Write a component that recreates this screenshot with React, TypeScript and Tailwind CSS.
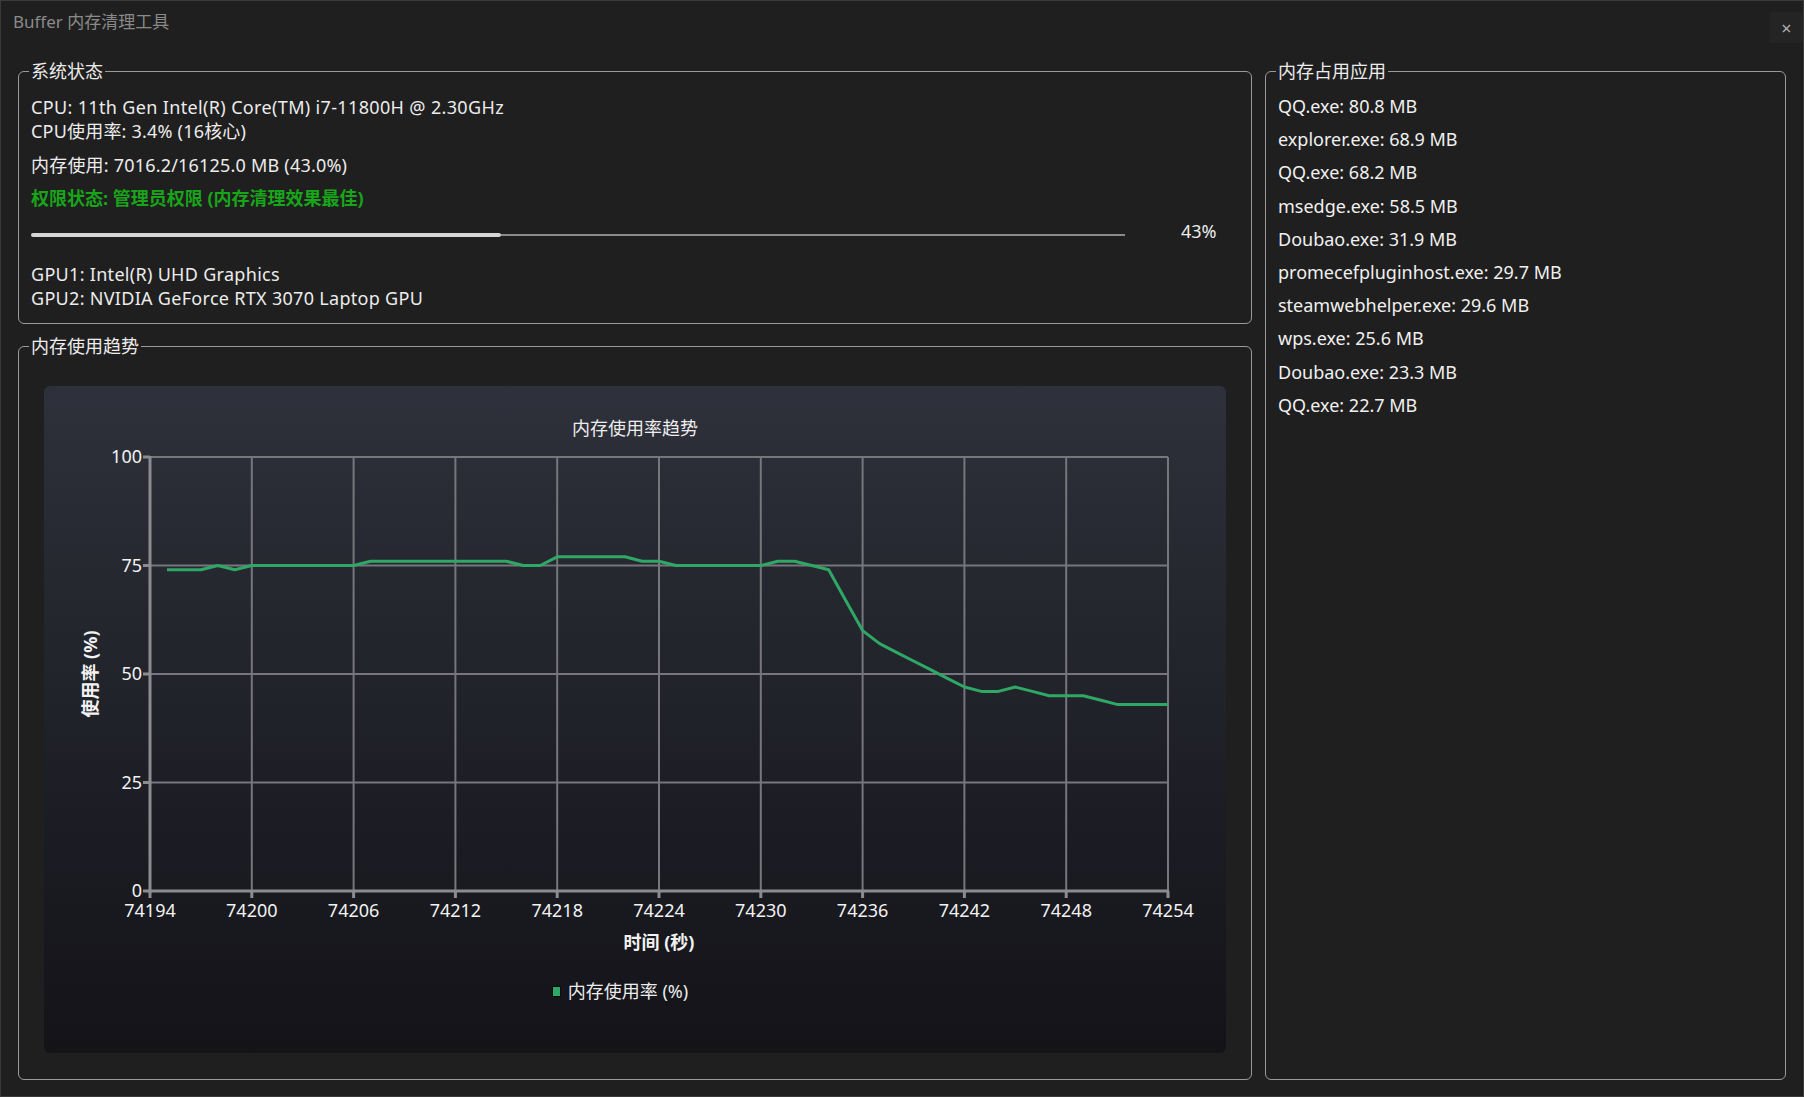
import React from 'react';

const FONT = "font-['Noto_Sans','Noto_Sans_CJK_SC',sans-serif]";

// memory usage samples, one per second starting at 74195
const usage = [
    74, 74, 74, 75, 74, 75, 75, 75, 75, 75, 75, 75, 76, 76, 76, 76, 76, 76, 76, 76, 76, 75, 75, 77, 77, 77, 77,
    77, 76, 76, 75, 75, 75, 75, 75, 75, 76, 76, 75, 74, 67, 60, 57, 55, 53, 51, 49, 47, 46, 46, 47, 46, 45, 45,
    45, 44, 43, 43, 43, 43,
];

const apps = [
    'QQ.exe: 80.8 MB',
    'explorer.exe: 68.9 MB',
    'QQ.exe: 68.2 MB',
    'msedge.exe: 58.5 MB',
    'Doubao.exe: 31.9 MB',
    'promecefpluginhost.exe: 29.7 MB',
    'steamwebhelper.exe: 29.6 MB',
    'wps.exe: 25.6 MB',
    'Doubao.exe: 23.3 MB',
    'QQ.exe: 22.7 MB',
];

// plot geometry inside the svg
const L = 106;
const R = 1124;
const T = 11;
const B = 445;
const T0 = 74194;
const xOf = (t: number) => L + ((t - T0) * (R - L)) / 60;
const yOf = (v: number) => B - (v * (B - T)) / 100;

function GroupBox({ title, className, children }: { title: string; className?: string; children: React.ReactNode }) {
    return (
        <fieldset className={`border border-[#9a9a9a] rounded-[6px] px-[10px] min-w-0 ${className ?? ''}`}>
            <legend className="px-[2px] leading-[24px] text-[18px] text-[#ececec]">{title}</legend>
            {children}
        </fieldset>
    );
}

function TrendChart() {
    const ticksX = Array.from({ length: 11 }, (_, i) => T0 + i * 6);
    const ticksY = [0, 25, 50, 75, 100];
    const points = usage.map((v, i) => `${xOf(T0 + 1 + i).toFixed(1)},${yOf(v).toFixed(1)}`).join(' ');

    return (
        <div className="flex-1 flex flex-col rounded-[6px] bg-linear-to-b from-[#2e313b] to-[#131318]">
            <div className="h-[60px] pt-[30px] text-center leading-[24px] text-[18px] text-[#ececec]">
                内存使用率趋势
            </div>
            <svg width="1182" height="520" className="block overflow-visible text-[18px]">
                {/* grid */}
                {ticksX.slice(1).map((t) => (
                    <line key={t} x1={xOf(t)} y1={T} x2={xOf(t)} y2={B} stroke="#76767c" strokeWidth="2" />
                ))}
                {ticksY.slice(1).map((v) => (
                    <line key={v} x1={L} y1={yOf(v)} x2={R} y2={yOf(v)} stroke="#76767c" strokeWidth="2" />
                ))}

                {/* axes + ticks */}
                <line x1={L} y1={T - 1} x2={L} y2={B + 1.5} stroke="#8c8c90" strokeWidth="3" />
                <line x1={L - 1.5} y1={B} x2={R + 1} y2={B} stroke="#8c8c90" strokeWidth="3" />
                {ticksY.map((v) => (
                    <line key={v} x1={L - 7} y1={yOf(v)} x2={L} y2={yOf(v)} stroke="#8c8c90" strokeWidth="3" />
                ))}
                {ticksX.map((t) => (
                    <line key={t} x1={xOf(t)} y1={B} x2={xOf(t)} y2={B + 7} stroke="#8c8c90" strokeWidth="3" />
                ))}

                {/* labels */}
                {ticksY.map((v) => (
                    <text key={v} x={L - 8} y={yOf(v) - 1} textAnchor="end" dominantBaseline="central" fill="#f2f2f2">
                        {v}
                    </text>
                ))}
                {ticksX.map((t) => (
                    <text key={t} x={xOf(t)} y={B + 19} textAnchor="middle" dominantBaseline="central" fill="#f2f2f2">
                        {t}
                    </text>
                ))}
                <text x={(L + R) / 2} y={B + 51} textAnchor="middle" dominantBaseline="central" fill="#f2f2f2" fontWeight="700">
                    时间 (秒)
                </text>
                <text
                    x={46}
                    y={(T + B) / 2}
                    textAnchor="middle"
                    dominantBaseline="central"
                    fill="#f2f2f2"
                    fontWeight="700"
                    transform={`rotate(-90 46 ${(T + B) / 2})`}
                >
                    使用率 (%)
                </text>

                <polyline points={points} fill="none" stroke="#2fa865" strokeWidth="3" strokeLinejoin="round" />
            </svg>
            <div className="h-[50px] flex items-center justify-center gap-[7px] text-[18px] text-[#ececec] pr-[30px]">
                <span className="w-[9px] h-[11px] bg-[#2fa865] border border-[#0c0c0c]"></span>
                <span>内存使用率 (%)</span>
            </div>
        </div>
    );
}

export default function App() {
    return (
        <div className={`w-[1804px] h-[1097px] flex flex-col bg-[#1f1f1f] border border-[#3a3a3a] ${FONT}`}>
            {/* title bar */}
            <div className="h-[45px] flex items-start justify-between pl-[12px]">
                <span className="mt-[9px] text-[17px] text-[#8a8a8a] leading-[24px]">Buffer 内存清理工具</span>
                <div className="w-[33px] h-[31px] mt-[11px] flex items-center justify-center bg-[#242424] text-[#b0b0b0] text-[18px] leading-none">
                    ×
                </div>
            </div>

            <div className="flex-1 flex gap-[13px] pl-[17px] pr-[17px] pt-[13px] pb-[16px] min-h-0">
                {/* left column */}
                <div className="w-[1234px] flex flex-col gap-[10px]">
                    <GroupBox title="系统状态" className="pt-[12px] pb-[13px]">
                        <div className="px-[2px] text-[18px] leading-[24px] text-[#ececec]">
                            <div className="tracking-[0.35px]">CPU: 11th Gen Intel(R) Core(TM) i7-11800H @ 2.30GHz</div>
                            <div className="tracking-[0.2px]">CPU使用率: 3.4% (16核心)</div>
                            <div className="mt-[9.5px] tracking-[0.2px]">内存使用: 7016.2/16125.0 MB (43.0%)</div>
                            <div className="mt-[9.5px] font-bold text-[#19a519]">权限状态: 管理员权限 (内存清理效果最佳)</div>
                            <div className="mt-[13px] h-[24px] flex items-center">
                                <div className="w-[1094px] h-[4px] flex items-center">
                                    <div className="w-[43%] h-[4px] rounded-full bg-[#d6d6d6]"></div>
                                    <div className="flex-1 h-[2px] bg-[#8a8a8a]"></div>
                                </div>
                                <span className="ml-[56px] -mt-[9px]">43%</span>
                            </div>
                            <div className="mt-[15px] tracking-[0.3px]">GPU1: Intel(R) UHD Graphics</div>
                            <div className="tracking-[0.3px]">GPU2: NVIDIA GeForce RTX 3070 Laptop GPU</div>
                        </div>
                    </GroupBox>

                    <GroupBox title="内存使用趋势" className="flex-1 flex pt-[28px] pb-[26px]">
                        <div className="flex-1 flex flex-col px-[15px] h-full">
                            <TrendChart />
                        </div>
                    </GroupBox>
                </div>

                {/* right column */}
                <GroupBox title="内存占用应用" className="flex-1 pt-[7px]">
                    <div className="px-[2px] flex flex-col text-[18px] text-[#f0f0f0]">
                        {apps.map((a, i) => (
                            <div key={i} className="h-[33.2px] leading-[33.2px]">
                                {a}
                            </div>
                        ))}
                    </div>
                </GroupBox>
            </div>
        </div>
    );
}
